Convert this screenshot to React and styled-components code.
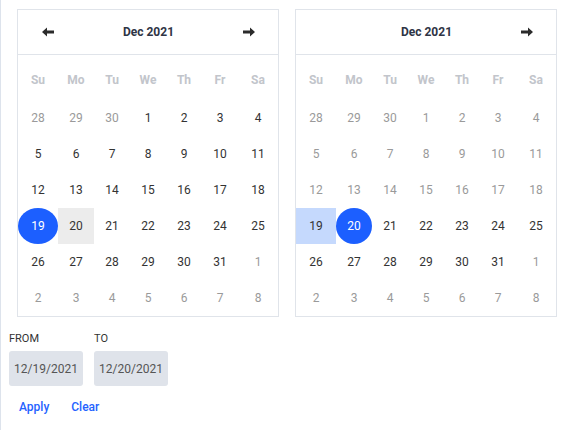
import React from 'react';
import styled, { createGlobalStyle } from 'styled-components';

const GlobalStyle = createGlobalStyle`
  body {
    margin: 0;
    background: #fff;
    font-family: Roboto, "Liberation Sans", sans-serif;
  }
`;

const WEEKDAYS = ['Su', 'Mo', 'Tu', 'We', 'Th', 'Fr', 'Sa'];

// 6 weeks of Dec 2021, with the spill-over days from Nov and Jan
const buildDays = () => {
  const days = [];
  [28, 29, 30].forEach((d) => days.push({ day: d, outside: true }));
  for (let d = 1; d <= 31; d++) days.push({ day: d, outside: false });
  for (let d = 1; d <= 8; d++) days.push({ day: d, outside: true });
  return days;
};

const ArrowIcon = ({ dir }) => (
  <svg width="12" height="10" viewBox="0 0 12 10">
    <path
      d="M0 5 L5 0.5 L5 3.6 L12 3.6 L12 6.4 L5 6.4 L5 9.5 Z"
      fill="#2b2b2b"
      transform={dir === 'right' ? 'translate(12 0) scale(-1 1)' : undefined}
    />
  </svg>
);

function Calendar({ showPrev, showNext, selected, rangeDay, hoverDay, disableBefore }) {
  const days = buildDays();
  return (
    <CalendarBox>
      <Header>
        <NavButton $hidden={!showPrev}>
          <ArrowIcon dir="left" />
        </NavButton>
        <MonthTitle>Dec 2021</MonthTitle>
        <NavButton $hidden={!showNext}>
          <ArrowIcon dir="right" />
        </NavButton>
      </Header>
      <Weekdays>
        {WEEKDAYS.map((w) => (
          <Weekday key={w}>{w}</Weekday>
        ))}
      </Weekdays>
      <DayGrid>
        {days.map((d, i) => {
          const inMonth = !d.outside;
          const isSelected = inMonth && d.day === selected;
          const muted = d.outside || (disableBefore && d.day < disableBefore);
          return (
            <DayCell
              key={i}
              $range={inMonth && d.day === rangeDay}
              $hover={inMonth && d.day === hoverDay}
            >
              {isSelected ? (
                <SelectedDay>{d.day}</SelectedDay>
              ) : (
                <DayNumber $muted={muted}>{d.day}</DayNumber>
              )}
            </DayCell>
          );
        })}
      </DayGrid>
    </CalendarBox>
  );
}

export default function App() {
  return (
    <Page>
      <GlobalStyle />
      <Calendars>
        <Calendar showPrev showNext selected={19} hoverDay={20} />
        <Calendar showNext selected={20} rangeDay={19} disableBefore={19} />
      </Calendars>
      <Fields>
        <Field>
          <FieldLabel>From</FieldLabel>
          <DateInput>12/19/2021</DateInput>
        </Field>
        <Field>
          <FieldLabel>To</FieldLabel>
          <DateInput>12/20/2021</DateInput>
        </Field>
      </Fields>
      <Actions>
        <TextButton>Apply</TextButton>
        <TextButton>Clear</TextButton>
      </Actions>
    </Page>
  );
}

const Page = styled.div`
  min-height: 430px;
  box-sizing: border-box;
  border-left: 1px solid #dde3ec;
  padding: 9px 0 0 8px;
`;

const Calendars = styled.div`
  display: flex;
  gap: 16px;
  padding-left: 8px;
`;

const CalendarBox = styled.div`
  width: 260px;
  border: 1px solid #e0e4ea;
  background: #fff;
`;

const Header = styled.div`
  height: 44px;
  display: flex;
  align-items: center;
  justify-content: space-between;
  padding: 0 23px 0 24px;
  border-bottom: 1px solid #e0e4ea;
`;

const NavButton = styled.div`
  width: 12px;
  height: 10px;
  display: flex;
  visibility: ${(p) => (p.$hidden ? 'hidden' : 'visible')};
  cursor: pointer;
`;

const MonthTitle = styled.div`
  font-size: 12px;
  font-weight: 700;
  color: #2e3445;
`;

const Weekdays = styled.div`
  display: grid;
  grid-template-columns: 40px repeat(5, 36px) 40px;
  height: 45px;
  padding-top: 5px;
  box-sizing: border-box;
`;

const Weekday = styled.div`
  display: flex;
  align-items: center;
  justify-content: center;
  font-size: 12px;
  font-weight: 700;
  color: #c2c5cb;
`;

const DayGrid = styled.div`
  display: grid;
  grid-template-columns: 40px repeat(5, 36px) 40px;
  grid-auto-rows: 36px;
`;

const DayCell = styled.div`
  display: flex;
  align-items: center;
  justify-content: center;
  background: ${(p) => (p.$range ? '#c5d9fd' : p.$hover ? '#ececec' : 'transparent')};
`;

const DayNumber = styled.span`
  font-size: 12px;
  color: ${(p) => (p.$muted ? '#9a9a9a' : '#333')};
`;

const SelectedDay = styled.span`
  width: 100%;
  height: 100%;
  border-radius: 50%;
  background: #1c5fff;
  color: #fff;
  font-size: 12px;
  display: flex;
  align-items: center;
  justify-content: center;
`;

const Fields = styled.div`
  display: flex;
  gap: 11px;
  margin-top: 15px;
`;

const Field = styled.div`
  display: flex;
  flex-direction: column;
  gap: 6px;
`;

const FieldLabel = styled.div`
  font-size: 11px;
  line-height: 13px;
  text-transform: uppercase;
  color: #333;
`;

const DateInput = styled.div`
  width: 74px;
  height: 35px;
  box-sizing: border-box;
  border-radius: 3px;
  background: #dfe3ea;
  color: #555;
  font-size: 12px;
  display: flex;
  align-items: center;
  justify-content: center;
`;

const Actions = styled.div`
  display: flex;
  gap: 22px;
  margin-top: 12px;
  padding-left: 10px;
`;

const TextButton = styled.button`
  border: none;
  background: none;
  padding: 0;
  font-family: inherit;
  font-size: 12px;
  line-height: 18px;
  font-weight: 500;
  color: #2563ff;
  cursor: pointer;
`;
